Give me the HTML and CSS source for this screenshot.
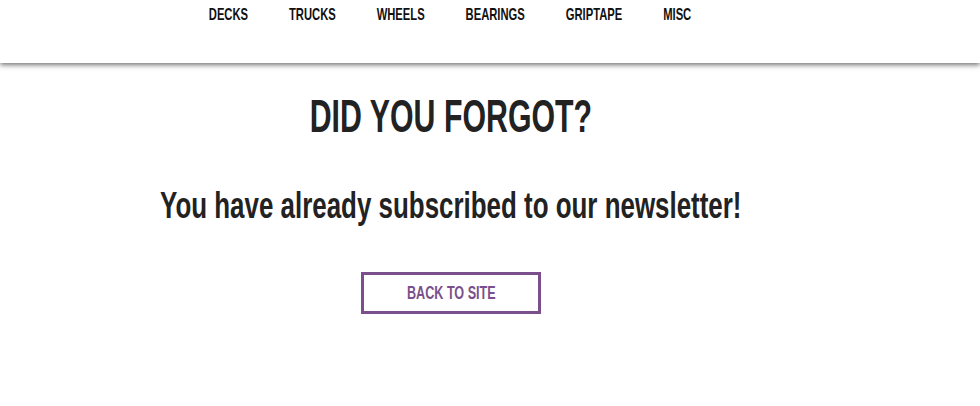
FILE: index.html
```html
<!DOCTYPE html>
<html lang="en">
<head>
<meta charset="utf-8">
<title>Did you forgot?</title>
<link rel="stylesheet" href="styles.css">
</head>
<body>
<header class="site-header">
  <nav class="main-nav">
    <a href="#" class="nav-link">DECKS</a>
    <a href="#" class="nav-link">TRUCKS</a>
    <a href="#" class="nav-link">WHEELS</a>
    <a href="#" class="nav-link">BEARINGS</a>
    <a href="#" class="nav-link">GRIPTAPE</a>
    <a href="#" class="nav-link">MISC</a>
  </nav>
</header>
<main class="content">
  <h1 class="title">DID YOU FORGOT?</h1>
  <p class="subtitle">You have already subscribed to our newsletter!</p>
  <a href="#" class="back-btn"><span class="back-label">BACK TO SITE</span></a>
</main>
</body>
</html>
```
FILE: styles.css
```css
html, body {
  margin: 0;
  padding: 0;
  background: #fff;
}
body {
  font-family: "Liberation Sans", Arial, sans-serif;
  color: #222;
}
.site-header {
  height: 63px;
  background: #fff;
  box-shadow: 0 2px 5px rgba(0, 0, 0, 0.55);
}
.main-nav {
  width: 900px;
  display: flex;
  justify-content: center;
  gap: 62px;
  padding-top: 5px;
  transform: scaleX(0.66);
  transform-origin: 450px 0;
}
.nav-link {
  font-size: 17px;
  font-weight: 700;
  color: #111;
  text-decoration: none;
  line-height: 20px;
}
.content {
  width: 902px;
  display: flex;
  flex-direction: column;
  align-items: center;
}
.title {
  margin: 27px 0 0;
  font-size: 47px;
  font-weight: 700;
  line-height: 52px;
  color: #222;
  transform: scaleX(0.645);
}
.subtitle {
  margin: 44px 0 0;
  font-size: 36px;
  font-weight: 700;
  line-height: 40px;
  color: #222;
  white-space: nowrap;
  transform: scaleX(0.72);
}
.back-btn {
  margin-top: 46px;
  box-sizing: border-box;
  width: 180px;
  height: 42px;
  border: 3px solid #7b4f8b;
  color: #7b4f8b;
  text-decoration: none;
  display: flex;
  align-items: center;
  justify-content: center;
}
.back-label {
  font-size: 18px;
  font-weight: 700;
  line-height: 20px;
  transform: scaleX(0.7);
}
```
